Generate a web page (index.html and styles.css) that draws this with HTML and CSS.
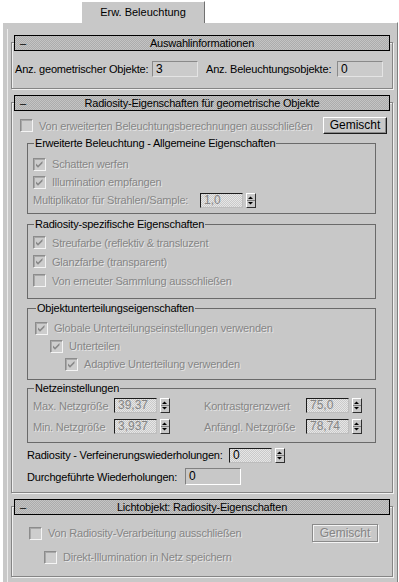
FILE: index.html
```html
<!DOCTYPE html>
<html lang="de">
<head>
    <meta charset="UTF-8">
    <title>Erw. Beleuchtung</title>
    <link rel="stylesheet" href="styles.css">
</head>
<body>
    <div class="tabs">
        <div class="tab">Erw. Beleuchtung</div>
    </div>
    <div class="panel">
        <div class="frame">

            <!-- Auswahlinformationen -->
            <div class="rollout r1">
                <div class="rollout-head"><span class="minus">&ndash;</span><span class="title">Auswahlinformationen</span><span class="minus"></span></div>
                <div class="info-row">
                    <span class="info-label l1">Anz. geometrischer Objekte:</span>
                    <span class="field info">3</span>
                    <span class="info-label l2">Anz. Beleuchtungsobjekte:</span>
                    <span class="field info">0</span>
                </div>
            </div>

            <!-- Radiosity-Eigenschaften geometrische Objekte -->
            <div class="rollout r2">
                <div class="rollout-head"><span class="minus">&ndash;</span><span class="title">Radiosity-Eigenschaften für geometrische Objekte</span><span class="minus"></span></div>
                <div class="top-row">
                    <span class="check"></span>
                    <span class="text off">Von erweiterten Beleuchtungsberechnungen ausschließen</span>
                    <span class="btn">Gemischt</span>
                </div>

                <fieldset class="group g1">
                    <legend>Erweiterte Beleuchtung - Allgemeine Eigenschaften</legend>
                    <div class="check-row"><span class="check on"></span><span class="text off">Schatten werfen</span></div>
                    <div class="check-row"><span class="check on"></span><span class="text off">Illumination empfangen</span></div>
                    <div class="check-row">
                        <span class="text off mult-label">Multiplikator für Strahlen/Sample:</span>
                        <span class="field num dis">1,0</span>
                        <span class="spin"></span>
                    </div>
                </fieldset>

                <fieldset class="group g2">
                    <legend>Radiosity-spezifische Eigenschaften</legend>
                    <div class="check-row"><span class="check on"></span><span class="text off">Streufarbe (reflektiv &amp; transluzent</span></div>
                    <div class="check-row"><span class="check on"></span><span class="text off">Glanzfarbe (transparent)</span></div>
                    <div class="check-row"><span class="check"></span><span class="text off">Von erneuter Sammlung ausschließen</span></div>
                </fieldset>

                <fieldset class="group g3">
                    <legend>Objektunterteilungseigenschaften</legend>
                    <div class="check-row"><span class="check on"></span><span class="text off">Globale Unterteilungseinstellungen verwenden</span></div>
                    <div class="check-row indent1"><span class="check on"></span><span class="text off">Unterteilen</span></div>
                    <div class="check-row indent2"><span class="check on"></span><span class="text off">Adaptive Unterteilung verwenden</span></div>
                </fieldset>

                <fieldset class="group g4">
                    <legend>Netzeinstellungen</legend>
                    <div class="net-row">
                        <span class="text off net-label">Max. Netzgröße</span>
                        <span class="field num dis">39,37</span>
                        <span class="spin"></span>
                        <span class="text off net-label right">Kontrastgrenzwert</span>
                        <span class="field num dis">75,0</span>
                        <span class="spin"></span>
                    </div>
                    <div class="net-row">
                        <span class="text off net-label">Min. Netzgröße</span>
                        <span class="field num dis">3,937</span>
                        <span class="spin"></span>
                        <span class="text off net-label right">Anfängl. Netzgröße</span>
                        <span class="field num dis">78,74</span>
                        <span class="spin"></span>
                    </div>
                </fieldset>

                <div class="plain-row refine">
                    <span class="text refine-label">Radiosity - Verfeinerungswiederholungen:</span>
                    <span class="field num">0</span>
                    <span class="spin"></span>
                </div>
                <div class="plain-row done">
                    <span class="text done-label">Durchgeführte Wiederholungen:</span>
                    <span class="field sunk">0</span>
                </div>
            </div>

            <!-- Lichtobjekt -->
            <div class="rollout r3">
                <div class="rollout-head"><span class="minus">&ndash;</span><span class="title">Lichtobjekt: Radiosity-Eigenschaften</span><span class="minus"></span></div>
                <div class="light-row">
                    <span class="check"></span>
                    <span class="text off">Von Radiosity-Verarbeitung ausschließen</span>
                    <span class="btn dis">Gemischt</span>
                </div>
                <div class="light-row sub">
                    <span class="check"></span>
                    <span class="text off">Direkt-Illumination in Netz speichern</span>
                </div>
            </div>

        </div>
    </div>
</body>
</html>
```

FILE: styles.css
```css
body {
    margin: 0;
    background: #fff;
    font-family: "Liberation Sans", Arial, sans-serif;
    font-size: 11px;
    letter-spacing: -0.2px;
    color: #000;
}
.tabs {
    height: 22px;
    padding-left: 81px;
    box-sizing: border-box;
    padding-top: 1px;
}
.tab {
    position: relative;
    width: 124px;
    height: 22px;
    box-sizing: border-box;
    background: #c8c8c8;
    border-left: 1px solid #fff;
    border-top: 1px solid #fff;
    border-right: 1px solid #707070;
    text-align: center;
    line-height: 20px;
    letter-spacing: 0;
}
.panel {
    margin-left: 2px;
    width: 396px;
    height: 560px;
    box-sizing: border-box;
    background: #c8c8c8;
    border-left: 1px solid #fff;
    border-top: 1px solid #fff;
    border-right: 1px solid #808080;
    padding: 6px 4px 0 4px;
}
.frame {
    border-left: 1px solid #ececec;
    padding: 6px 0 0 3px;
    height: 553px;
    box-sizing: border-box;
}

/* rollouts */
.rollout {
    border: 1px solid #858585;
    box-shadow: inset 1px 1px 0 #f0f0f0, 1px 1px 0 #f0f0f0;
}
.rollout + .rollout {
    margin-top: 13px;
}
.r1 {
    margin-top: 7px;
    padding-bottom: 11px;
}
.r2 {
    padding-bottom: 7px;
}
.r3 {
    height: 71px;
    box-sizing: border-box;
}
.rollout-head {
    display: flex;
    align-items: center;
    height: 16px;
    box-sizing: border-box;
    margin: -8px 2px 0 2px;
    border: 1px solid #000;
    background: repeating-conic-gradient(#c4c4c4 0 25%, #acacac 0 50%) 0 0 / 2px 2px;
    padding: 0 5px;
}
.minus {
    width: 12px;
}
.title {
    flex: 1;
    text-align: center;
}

/* plain text and controls */
.text {
    white-space: nowrap;
}
.off {
    color: #868686;
    text-shadow: 1px 1px 0 rgba(255, 255, 255, 0.55);
}
.field {
    display: inline-block;
    box-sizing: border-box;
    height: 16px;
    line-height: 14px;
    padding-left: 3px;
    font-size: 12px;
    letter-spacing: 0;
}
.info {
    width: 46px;
    border: 1px solid;
    border-color: #8a8a8a #e4e4e4 #e4e4e4 #8a8a8a;
    background: #cbcbcb;
}
.num {
    width: 43px;
    height: 15px;
    line-height: 13px;
    border: 1px solid;
    border-color: #1c1c1c #bdbdbd #bdbdbd #1c1c1c;
    background: repeating-conic-gradient(#e6e6e6 0 25%, #cacaca 0 50%) 0 0 / 2px 2px;
}
.num.dis {
    color: #858585;
}
.sunk {
    width: 56px;
    height: 17px;
    line-height: 15px;
    border: 1px solid;
    border-color: #808080 #fff #fff #808080;
}
.spin {
    width: 10px;
    height: 15px;
    margin-left: 3px;
    box-sizing: border-box;
    border: 1px solid;
    border-color: #fff #303030 #303030 #fff;
    background:
        linear-gradient(#808080, #808080) center / 8px 1px no-repeat,
        url("data:image/svg+xml,%3Csvg xmlns='http://www.w3.org/2000/svg' width='8' height='13'%3E%3Cpath d='M1 5h5L3.5 2.5z' fill='%23000'/%3E%3Cpath d='M1 8h5L3.5 10.5z' fill='%23000'/%3E%3C/svg%3E") 0 0 no-repeat;
}
.check {
    flex: none;
    width: 13px;
    height: 13px;
    box-sizing: border-box;
    border: 1px solid;
    border-color: #8c8c8c #f4f4f4 #f4f4f4 #8c8c8c;
    box-shadow: inset 1px 1px 0 #a8a8a8;
    background: #cdcdcd;
    margin-right: 6px;
}
.check.on {
    background: #cdcdcd url("data:image/svg+xml,%3Csvg xmlns='http://www.w3.org/2000/svg' width='11' height='11'%3E%3Cpath d='M2 4.5l2 2 4.5-4.5v2.2L4 8.7 2 6.7z' fill='%23888'/%3E%3C/svg%3E") 0 0 no-repeat;
}
.btn {
    display: inline-block;
    box-sizing: border-box;
    width: 64px;
    height: 17px;
    line-height: 15px;
    text-align: center;
    font-size: 12px;
    letter-spacing: 0;
    border: 1px solid;
    border-color: #fff #1c1c1c #1c1c1c #fff;
    box-shadow: inset -1px -1px 0 #8a8a8a;
}
.btn.dis {
    width: 66px;
    height: 18px;
    line-height: 16px;
    color: #858585;
    text-shadow: 1px 1px 0 rgba(255, 255, 255, 0.6);
    border-color: #8a8a8a;
    box-shadow: inset 1px 1px 0 #f4f4f4, 1px 1px 0 #f4f4f4;
}

/* rollout 1 */
.info-row {
    display: flex;
    align-items: center;
    height: 16px;
    margin-top: 10px;
    padding-left: 3px;
}
.info-label {
    white-space: nowrap;
}
.l1 {
    width: 137px;
}
.l2 {
    width: 131px;
    margin-left: 8px;
}

/* rollout 2 */
.top-row {
    display: flex;
    align-items: center;
    height: 17px;
    margin-top: 6px;
    padding-left: 8px;
}
.top-row .btn {
    margin-left: auto;
    margin-right: 5px;
}
.group {
    margin: 2px 16px 0 15px;
    padding: 0 0 0 5px;
    border: 1px solid #6a6a6a;
    min-width: 0;
}
.group legend {
    margin-left: 1px;
    padding: 0 1px;
    line-height: 14px;
}
.check-row {
    display: flex;
    align-items: center;
    height: 18px;
}
.g1 {
    padding-top: 5px;
    padding-bottom: 4px;
}
.mult-label {
    width: 167px;
}
.g2 {
    margin-top: 3px;
    padding-top: 2px;
    padding-bottom: 8px;
}
.g2 .check-row {
    height: 19px;
}
.g3 {
    margin-top: 2px;
    padding-left: 7px;
    padding-top: 4px;
    padding-bottom: 6px;
}
.indent1 {
    padding-left: 15px;
}
.indent2 {
    padding-left: 30px;
}
.g4 {
    margin-top: 1px;
    padding-top: 2px;
    padding-bottom: 7px;
}
.net-row {
    display: flex;
    align-items: center;
    height: 17px;
}
.net-row + .net-row {
    margin-top: 4px;
}
.net-label {
    width: 81px;
}
.net-label.right {
    width: 102px;
    margin-left: 34px;
}
.plain-row {
    display: flex;
    align-items: center;
    padding-left: 15px;
}
.refine {
    height: 16px;
    margin-top: 4px;
}
.refine-label {
    width: 202px;
}
.done {
    height: 17px;
    margin-top: 5px;
}
.done-label {
    width: 158px;
}

/* rollout 3 */
.light-row {
    display: flex;
    align-items: center;
    height: 18px;
    margin-top: 9px;
    padding-left: 17px;
}
.light-row .btn {
    margin-left: auto;
    margin-right: 14px;
}
.light-row.sub {
    margin-top: 6px;
    padding-left: 32px;
}
```
